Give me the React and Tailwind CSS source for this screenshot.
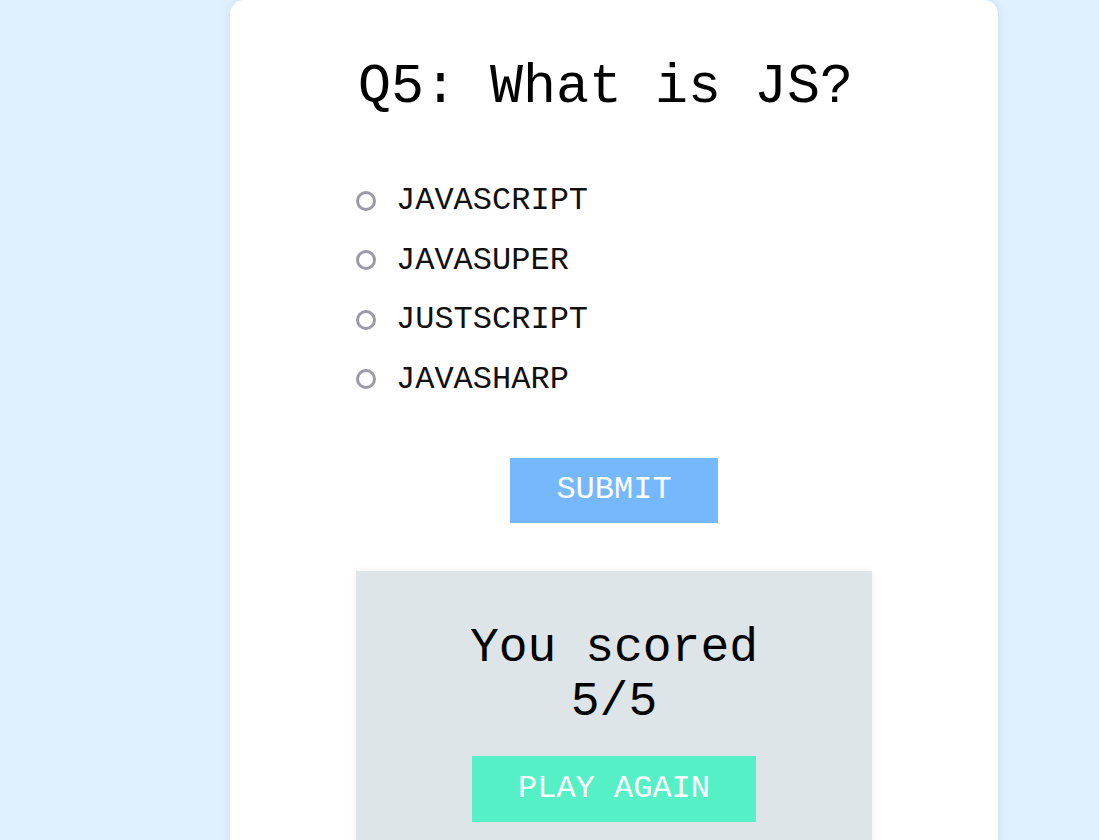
import React, { useState } from "react";

const options = ["JAVASCRIPT", "JAVASUPER", "JUSTSCRIPT", "JAVASHARP"];

export default function App() {
  const [picked, setPicked] = useState(null);

  return (
    <div className="min-h-screen bg-[#e1f0fe] pl-[230px]" style={{ fontFamily: '"Courier New", "Nimbus Mono PS", FreeMono, "Liberation Mono", monospace' }}>
      <div className="w-[768px] bg-white rounded-[14px] shadow-[0_0_10px_rgba(120,160,210,0.25)] pt-14 px-[126px] pb-12">
        {/* Question */}
        <h1 className="text-[55px] leading-[normal] text-black pl-[2px]">Q5: What is JS?</h1>

        {/* Answers */}
        <div className="mt-[63px] flex flex-col gap-[22.5px]">
          {options.map((opt) => (
            <label key={opt} className="flex items-center gap-[20px] cursor-pointer" onClick={() => setPicked(opt)}>
              <span className="w-5 h-5 rounded-full border-[3px] border-[#9c9aa6] flex items-center justify-center">
                {picked === opt && <span className="w-2 h-2 rounded-full bg-[#9c9aa6]" />}
              </span>
              <span className="text-[32px] leading-[normal] text-[#111]">{opt}</span>
            </label>
          ))}
        </div>

        <div className="mt-[60px] flex justify-center">
          <button className="h-[65px] px-[46px] bg-[#75b8fe] text-white text-[32px] leading-none">SUBMIT</button>
        </div>

        {/* Result */}
        <div className="mt-12 bg-[#dee5e9] shadow-[0_0_8px_rgba(0,0,0,0.06)] pt-[50px] pb-12 flex flex-col items-center">
          <p className="text-[48px] leading-[normal] text-black text-center">
            You scored
            <br />
            5/5
          </p>
          <button className="mt-[27px] h-[66px] px-[46px] bg-[#56f0c7] text-white text-[32px] leading-none">PLAY AGAIN</button>
        </div>
      </div>
    </div>
  );
}
